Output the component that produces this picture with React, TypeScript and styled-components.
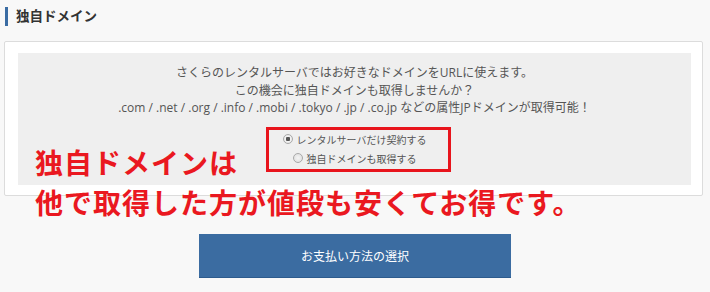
import React from "react";
import styled, { createGlobalStyle } from "styled-components";

const Global = createGlobalStyle`
  html, body { margin: 0; padding: 0; }
  body {
    background: #f8f8f8;
    font-family: "Open Sans", "Noto Sans CJK JP", sans-serif;
    color: #555;
  }
`;

const Page = styled.div`
  position: relative;
  width: 710px;
  height: 292px;
  overflow: hidden;
  padding-top: 7px;
  box-sizing: border-box;
`;

const Heading = styled.h2`
  margin: 0 0 0 5px;
  padding-left: 8px;
  border-left: 3px solid #3a6ca3;
  height: 19px;
  line-height: 19px;
  font-size: 13.5px;
  font-weight: bold;
  color: #333;
`;

const Card = styled.section`
  margin: 15px 0 0 4px;
  width: 699px;
  box-sizing: border-box;
  background: #fff;
  border: 1px solid #dcdcdc;
  border-radius: 2px;
  padding: 11px 11px 10px 13px;
`;

const Inner = styled.div`
  background: #efefef;
  padding: 11px 0 17px;
  display: flex;
  flex-direction: column;
  align-items: center;
`;

const Intro = styled.p`
  margin: 0;
  font-size: 12px;
  line-height: 17.5px;
  text-align: center;
  color: #555;
`;

const Options = styled.div`
  margin-top: 13px;
  display: flex;
  flex-direction: column;
  align-items: center;
`;

const Option = styled.label`
  display: flex;
  align-items: center;
  gap: 4px;
  height: 19px;
  font-size: 10px;
  color: #555;
`;

const Radio = styled.span<{ $checked?: boolean }>`
  width: 8px;
  height: 8px;
  border-radius: 50%;
  border: 1px solid #a9a9a9;
  background: radial-gradient(circle at 50% 50%, ${(p) => (p.$checked ? "#555 0 2px, #f4f4f4 2.5px" : "#f4f4f4 0")}, #dcdcdc 100%);
  box-sizing: content-box;
  flex: none;
`;

const ButtonRow = styled.div`
  display: flex;
  justify-content: center;
  margin-top: 38px;
`;

const PayButton = styled.button`
  width: 312px;
  height: 44px;
  border: none;
  border-bottom: 1px solid #2d5b8d;
  background: #3b6ca1;
  color: #fff;
  font-family: "Noto Sans CJK JP", sans-serif;
  font-size: 12px;
  cursor: pointer;
`;

const Highlight = styled.div`
  position: absolute;
  left: 266px;
  top: 127px;
  width: 185px;
  height: 45px;
  box-sizing: border-box;
  border: 3px solid #e8141c;
`;

const Note = styled.div`
  position: absolute;
  left: 35px;
  top: 142px;
  font-family: "Noto Sans CJK JP", sans-serif;
  font-size: 28px;
  font-weight: bold;
  letter-spacing: 1px;
  line-height: 40px;
  color: #ea1820;
  white-space: nowrap;
`;

export default function App() {
  return (
    <Page>
      <Global />
      <Heading>独自ドメイン</Heading>
      <Card>
        <Inner>
          <Intro>
            さくらのレンタルサーバではお好きなドメインをURLに使えます。
            <br />
            この機会に独自ドメインも取得しませんか？
            <br />
            .com / .net / .org / .info / .mobi / .tokyo / .jp / .co.jp などの属性JPドメインが取得可能！
          </Intro>
          <Options>
            <Option>
              <Radio $checked />
              レンタルサーバだけ契約する
            </Option>
            <Option>
              <Radio />
              独自ドメインも取得する
            </Option>
          </Options>
        </Inner>
      </Card>
      <ButtonRow>
        <PayButton>お支払い方法の選択</PayButton>
      </ButtonRow>
      <Highlight />
      <Note>
        独自ドメインは
        <br />
        他で取得した方が値段も安くてお得です。
      </Note>
    </Page>
  );
}
